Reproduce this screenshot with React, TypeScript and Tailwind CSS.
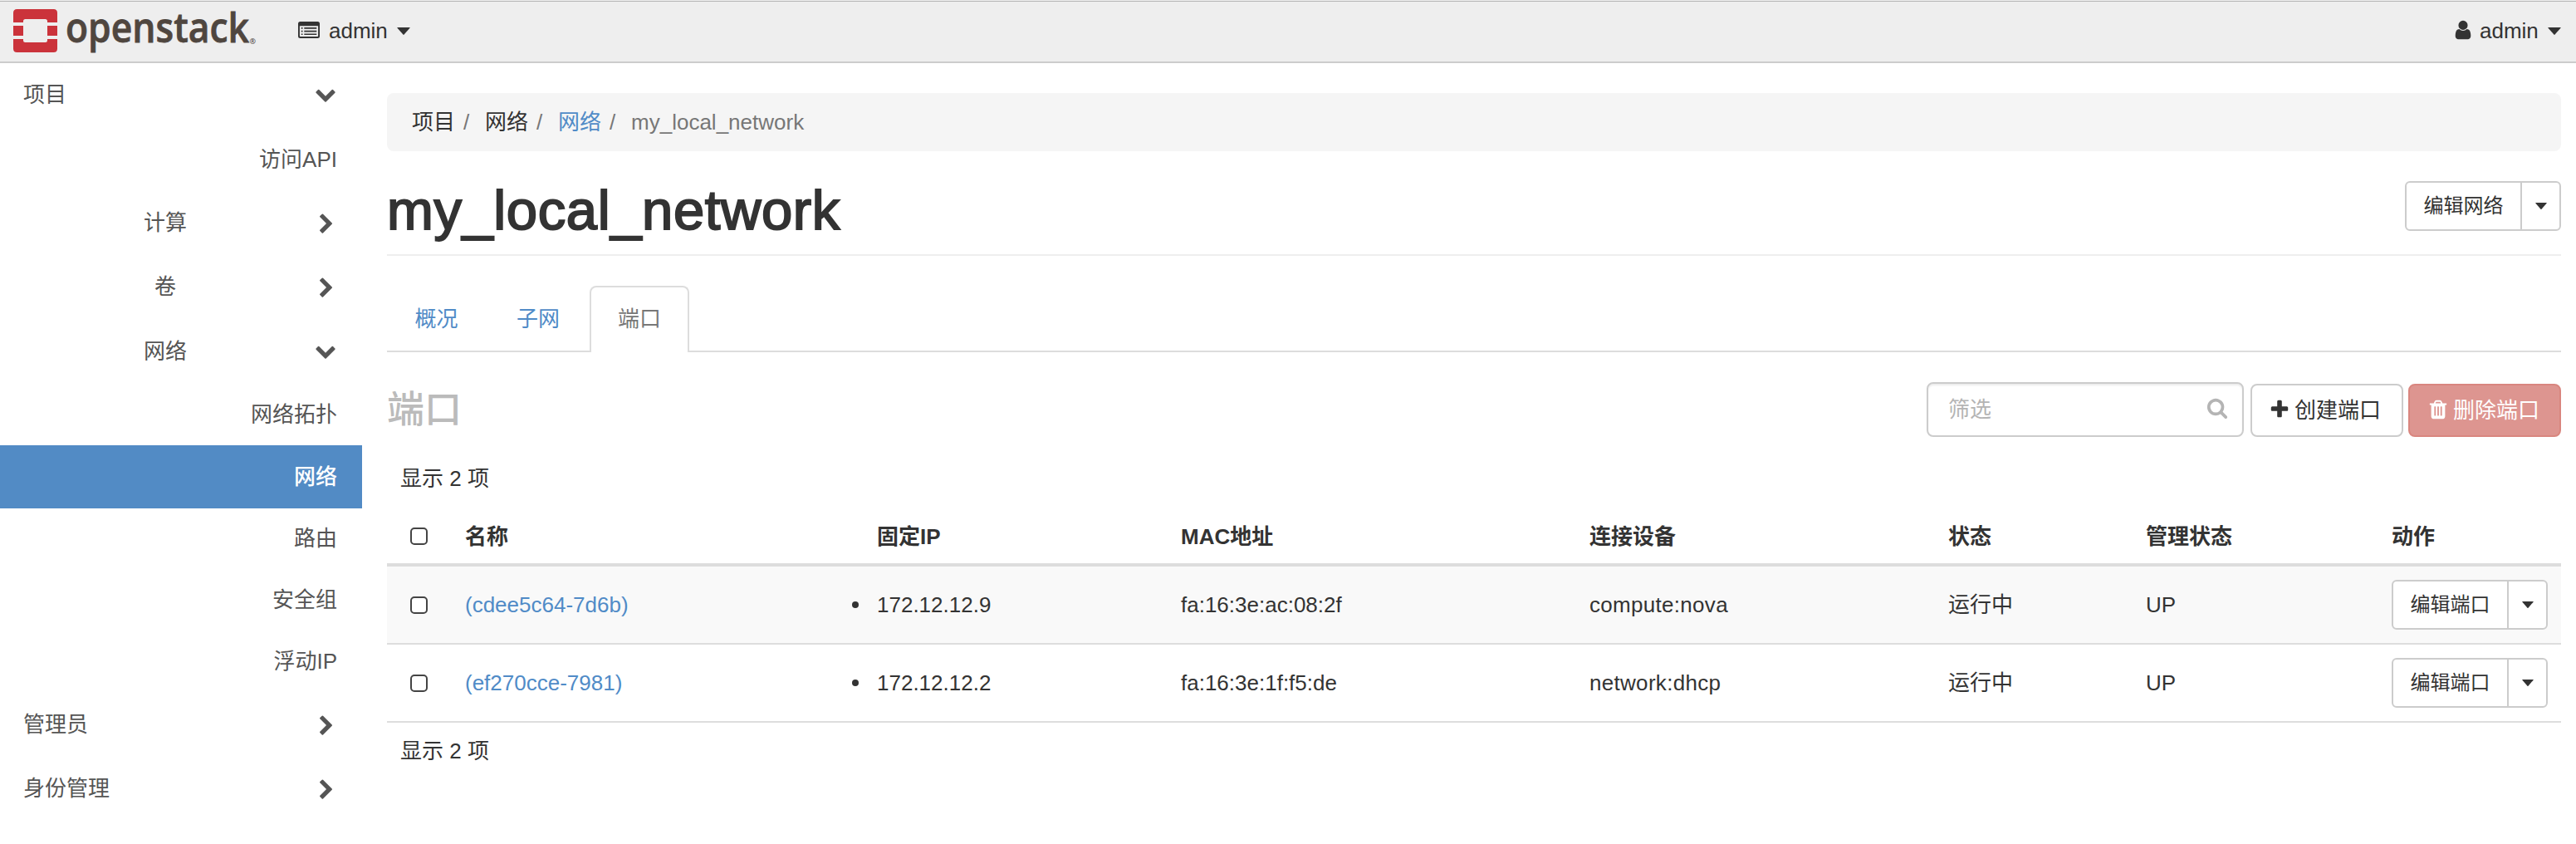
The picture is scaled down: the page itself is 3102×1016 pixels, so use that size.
import React from "react";

type IconProps = { d: string; className?: string };

const Glyph = ({ d, className = "" }: IconProps) => (
  <svg viewBox="0 0 1792 1792" fill="currentColor" className={`size-[26px] shrink-0 ${className}`} aria-hidden="true">
    <path d={d} />
  </svg>
);

const CHEVRON_DOWN =
  "M1683 808l-742 741q-19 19-45 19t-45-19l-742-741q-19-19-19-45.5t19-45.5l166-165q19-19 45-19t45 19l531 531 531-531q19-19 45-19t45 19l166 165q19 19 19 45.5t-19 45.5z";
const CHEVRON_RIGHT =
  "M1363 877l-742 742q-19 19-45 19t-45-19l-166-166q-19-19-19-45t19-45l531-531-531-531q-19-19-19-45t19-45l166-166q19-19 45-19t45 19l742 742q19 19 19 45t-19 45z";
const USER =
  "M1536 1399q0 109-62.5 187t-150.5 78h-854q-88 0-150.5-78t-62.5-187q0-85 8.5-160.5t31.5-152 58.5-131 94-89 134.5-34.5q131 128 313 128t313-128q76 0 134.5 34.5t94 89 58.5 131 31.5 152 8.5 160.5zm-256-887q0 159-112.5 271.5t-271.5 112.5-271.5-112.5-112.5-271.5 112.5-271.5 271.5-112.5 271.5 112.5 112.5 271.5z";
const PLUS =
  "M1600 736v192q0 40-28 68t-68 28h-416v416q0 40-28 68t-68 28h-192q-40 0-68-28t-28-68v-416h-416q-40 0-68-28t-28-68v-192q0-40 28-68t68-28h416v-416q0-40 28-68t68-28h192q40 0 68 28t28 68v416h416q40 0 68 28t28 68z";
const TRASH =
  "M704 1376v-704q0-14-9-23t-23-9h-64q-14 0-23 9t-9 23v704q0 14 9 23t23 9h64q14 0 23-9t9-23zm256 0v-704q0-14-9-23t-23-9h-64q-14 0-23 9t-9 23v704q0 14 9 23t23 9h64q14 0 23-9t9-23zm256 0v-704q0-14-9-23t-23-9h-64q-14 0-23 9t-9 23v704q0 14 9 23t23 9h64q14 0 23-9t9-23zm-544-992h448l-48-117q-7-9-17-11h-317q-10 2-17 11zm928 32v64q0 14-9 23t-23 9h-96v948q0 83-47 143.5t-113 60.5h-832q-66 0-113-58.5t-47-141.5v-952h-96q-14 0-23-9t-9-23v-64q0-14 9-23t23-9h309l70-167q15-37 54-63t79-26h320q40 0 79 26t54 63l70 167h309q14 0 23 9t9 23z";
const SEARCH =
  "M1216 832q0-185-131.5-316.5t-316.5-131.5-316.5 131.5-131.5 316.5 131.5 316.5 316.5 131.5 316.5-131.5 131.5-316.5zm512 832q0 52-38 90t-90 38q-54 0-90-38l-343-342q-179 124-399 124-143 0-273.5-55.5t-225-150-150-225-55.5-273.5 55.5-273.5 150-225 225-150 273.5-55.5 273.5 55.5 225 150 150 225 55.5 273.5q0 220-124 399l343 343q37 37 37 90z";

const Caret = ({ className }: { className: string }) => (
  <svg viewBox="0 0 16 9" fill="currentColor" className={`shrink-0 ${className}`} preserveAspectRatio="none" aria-hidden="true">
    <path d="M0.8 0h14.4q.8 0 .3.8L8.6 8.6q-.6.6-1.2 0L.5.8Q0 0 .8 0z" />
  </svg>
);

const ListIcon = () => (
  <svg viewBox="0 0 26 20" className="-mt-[3px] h-5 w-[26px] shrink-0" fill="currentColor" aria-hidden="true">
    <path fillRule="evenodd" d="M2.5 0h21Q26 0 26 2.5v15q0 2.500-2.500 2.500h-21Q0 20 0 17.500v-15Q0 0 2.500 0zM1.900 5.300v12q0 .8.8.8h20.600q.8 0 .8-.8v-12z" />
    <path d="M3.800 7h1.700v1.700H3.800zM3.800 10.700h1.700v1.700H3.800zM3.800 14.400h1.700v1.700H3.800zM7.300 7h15v1.700h-15zM7.300 10.700h15v1.700h-15zM7.300 14.400h15v1.700h-15z" />
  </svg>
);

const Logo = () => (
  <svg viewBox="0 0 359 76" className="h-[76px] w-[359px] overflow-visible" role="img" aria-label="openstack">
    <g fill="#cb333b">
      <path d="M16 28V16.500q0-4.500 4.500-4.500h44q4.500 0 4.500 4.500V28H57v-1.500q0-2.500-2.500-2.500h-24Q28 24 28 26.500V28z" />
      <path d="M16 32h12v12H16zM57 32h12v12H57z" />
      <path d="M16 48v11.500q0 4.500 4.500 4.500h44q4.500 0 4.500-4.500V48H57v1.500q0 2.500-2.500 2.500h-24q-2.500 0-2.500-2.500V48z" />
    </g>
    <g fill="#4f463f" fontFamily="'Open Sans'">
      <text x="79" y="51.500" fontWeight="600" fontSize="49" textLength="221" lengthAdjust="spacingAndGlyphs" stroke="#4f463f" strokeWidth="0.8">
        openstack
      </text>
      <text x="300.500" y="54" fontWeight="600" fontSize="9">
        ®
      </text>
    </g>
  </svg>
);

const Header = () => (
  <header className="flex h-[76px] shrink-0 items-center border-b-2 border-[#ccc] bg-[#eee] shadow-[inset_0_1px_0_#f0f0f0,inset_0_2px_0_#b4b4b4]">
    <Logo />
    <div className="flex items-center">
      <ListIcon />
      <span className="ml-[11px] w-[72px] pb-px">admin</span>
      <Caret className="ml-[10px] h-[9px] w-4" />
    </div>
    <div className="ml-auto flex items-center pr-[18px]">
      <Glyph d={USER} className="-translate-y-px" />
      <span className="ml-[7px] w-[72px] pb-px">admin</span>
      <Caret className="ml-[10px] h-[9px] w-4" />
    </div>
  </header>
);

const Leaf = ({ label, className }: { label: string; className: string }) => (
  <div className={`flex items-center justify-end pr-[30px] pb-px ${className}`}>{label}</div>
);

const Group = ({ label, open, nested, className }: { label: string; open?: boolean; nested?: boolean; className: string }) => (
  <div className={`flex items-center pl-7 pr-[31px] ${className}`}>
    <span className={nested ? "flex-1 pr-[9px] pb-[2px] text-center" : "flex-1 pb-[2px]"}>{label}</span>
    <Glyph d={open ? CHEVRON_DOWN : CHEVRON_RIGHT} className={open ? "-translate-y-[2px]" : "translate-x-px translate-y-px"} />
  </div>
);

const Sidebar = () => (
  <nav className="flex w-[436px] shrink-0 flex-col text-[#555]">
    <Group label="项目" open className="h-[78px]" />
    <Leaf label="访问API" className="h-[76px]" />
    <Group label="计算" nested className="h-[77px]" />
    <Group label="卷" nested className="h-[78px]" />
    <Group label="网络" nested open className="h-[77px]" />
    <Leaf label="网络拓扑" className="h-[74px]" />
    <Leaf label="网络" className="h-[76px] bg-[#528bc5] font-medium text-white" />
    <Leaf label="路由" className="h-[73px]" />
    <Leaf label="安全组" className="h-[74px]" />
    <Leaf label="浮动IP" className="h-[74px]" />
    <Group label="管理员" className="h-[80px]" />
    <Group label="身份管理" className="h-[74px]" />
  </nav>
);

const SplitButton = ({ label }: { label: string }) => (
  <div className="flex h-[60px] w-[188px] rounded-[6px] border-2 border-[#ccc] bg-white text-2xl">
    <button className="flex w-[139px] items-center justify-center border-r-2 border-[#ccc]">{label}</button>
    <button className="flex flex-1 items-center justify-center" aria-label="更多">
      <Caret className="h-2 w-[14px]" />
    </button>
  </div>
);

const Slash = () => <span className="w-9 pl-[10px] text-[#777]">/</span>;

const Breadcrumb = () => (
  <div className="flex h-[70px] items-center rounded-lg bg-[#f5f5f5] pl-[30px] pb-px">
    <span>项目</span>
    <Slash />
    <span>网络</span>
    <Slash />
    <a className="text-[#508bc7]">网络</a>
    <Slash />
    <span className="text-[#777]">my_local_network</span>
  </div>
);

const Tabs = () => (
  <div className="mt-9 flex h-20 gap-[2px] border-b-2 border-[#ddd] pb-px text-[#508bc7]">
    <a className="flex h-[79px] w-[119px] items-center justify-center">概况</a>
    <a className="ml-px flex h-[79px] w-[120px] items-center justify-center">子网</a>
    <a className="flex h-20 w-[120px] shrink-0 items-center justify-center rounded-t-lg border-2 border-b-0 border-[#ddd] bg-white pb-[2px] text-[#777]">端口</a>
  </div>
);

const Toolbar = () => (
  <div className="mt-9 flex h-[66px] items-end">
    <h3 className="flex-1 self-start pt-[3px] text-[45px] leading-[62px] font-medium text-[#bbb]">端口</h3>
    <div className="flex h-[66px] w-[382px] items-center justify-between rounded-lg border-2 border-[#ccc] bg-white pl-6 pr-[17px] text-[#b4b4b4] shadow-[inset_0_2px_2px_rgba(0,0,0,0.075)]">
      <span>筛选</span>
      <Glyph d={SEARCH} className="-translate-y-[2px]" />
    </div>
    <button className="ml-2 flex h-16 w-[184px] items-center rounded-lg border-2 border-[#ccc] bg-white pl-5">
      <Glyph d={PLUS} className="-translate-y-px" />
      <span className="ml-[5px]">创建端口</span>
    </button>
    <button className="ml-[6px] flex h-16 w-[184px] items-center rounded-lg border-2 border-[#d9867f] bg-[#dd9590] pl-[21px] text-white">
      <Glyph d={TRASH} className="-translate-y-px" />
      <span className="ml-[5px]">删除端口</span>
    </button>
  </div>
);

const COLS = "grid grid-cols-[78px_496px_366px_492px_432px_238px_296px_220px] items-center";

const Check = () => <span className="ml-[28px] size-[21px] rounded-[5px] border-2 border-[#444] bg-white" />;

const rows = [
  { name: "(cdee5c64-7d6b)", ip: "172.12.12.9", mac: "fa:16:3e:ac:08:2f", device: "compute:nova" },
  { name: "(ef270cce-7981)", ip: "172.12.12.2", mac: "fa:16:3e:1f:f5:de", device: "network:dhcp" },
];

const PortsTable = () => (
  <section>
    <div className="flex h-[82px] items-end pb-[14px] pl-4">显示 2 项</div>
    <div className={`${COLS} h-[74px] border-b-4 border-[#ddd] pt-[5px] font-bold`}>
      <Check />
      {["名称", "固定IP", "MAC地址", "连接设备", "状态", "管理状态", "动作"].map((h) => (
        <span key={h} className="pl-4">{h}</span>
      ))}
    </div>
    {rows.map((r) => (
      <div key={r.name} className={`${COLS} h-[94px] border-b-2 border-[#ddd] odd:bg-[#f9f9f9]`}>
        <Check />
        <a className="pl-4 pb-px text-[#508bc7]">{r.name}</a>
        <span className="-ml-[14px] flex items-center pb-px">
          <i className="mr-[22px] size-2 rounded-full bg-[#333]" />
          {r.ip}
        </span>
        <span className="pl-4 pb-px">{r.mac}</span>
        <span className="pl-4 pb-px tracking-[0.3px]">{r.device}</span>
        <span className="pl-4 pb-px">运行中</span>
        <span className="pl-4 pb-px">UP</span>
        <div className="pl-4">
          <SplitButton label="编辑端口" />
        </div>
      </div>
    ))}
    <div className="flex h-[67px] items-center pl-4">显示 2 项</div>
  </section>
);

export default function App() {
  return (
    <div className="flex h-[1016px] w-[3102px] flex-col overflow-hidden bg-white font-['Liberation_Sans','Noto_Sans_CJK_SC',sans-serif] text-[26px] leading-9 text-[#333]">
      <Header />
      <div className="flex flex-1">
        <Sidebar />
        <main className="ml-[30px] w-[2618px] pt-9">
          <Breadcrumb />
          <div className="flex h-[126px] justify-between border-b-2 border-[#eee]">
            <h1 className="pt-[31px] text-[67px] leading-[80px] tracking-[0.6px] [-webkit-text-stroke:2px_#333]">my_local_network</h1>
            <div className="pt-9">
              <SplitButton label="编辑网络" />
            </div>
          </div>
          <Tabs />
          <Toolbar />
          <PortsTable />
        </main>
      </div>
    </div>
  );
}
